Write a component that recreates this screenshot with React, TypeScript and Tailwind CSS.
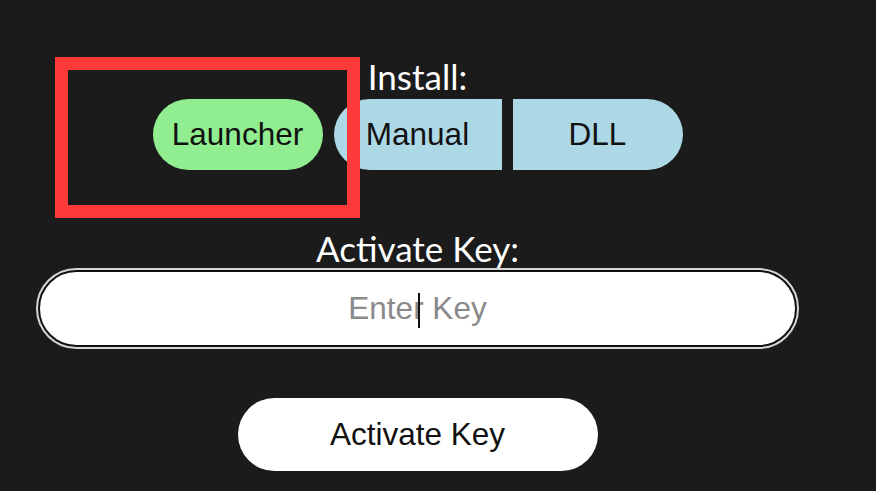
import { useState } from 'react';

const App = () => {
  const [mode, setMode] = useState('launcher');
  const [key, setKey] = useState('');

  return (
    <div className="relative min-h-screen w-full bg-[#1b1b1b] overflow-hidden">
      <div className="w-[835px] flex flex-col items-center pt-[55px]">
        <h2 className="text-white text-[35px] leading-[43px] font-['Lato',sans-serif]">Install:</h2>
        <div className="mt-[1px] flex items-center gap-[11px] font-['Liberation_Sans',Arial,sans-serif] text-[31.5px] text-[#111]">
          <button
            onClick={() => setMode('launcher')}
            className="w-[170px] h-[71px] rounded-full bg-[#90ee90] cursor-pointer">
            Launcher
          </button>
          <button
            onClick={() => setMode('manual')}
            className="w-[168px] h-[71px] rounded-l-full bg-[#add8e6] cursor-pointer">
            Manual
          </button>
          <button
            onClick={() => setMode('dll')}
            className="w-[170px] h-[71px] rounded-r-full bg-[#add8e6] cursor-pointer">
            DLL
          </button>
        </div>

        <h2 className="mt-[57px] text-white text-[35px] leading-[43px] font-['Lato',sans-serif]">Activate Key:</h2>
        <div className="relative">
          <input
            value={key}
            onChange={(e) => setKey(e.target.value)}
            placeholder="Enter Key"
            data-mode={mode}
            className="w-[759px] h-[77px] rounded-full bg-white border-2 border-[#111] outline-2 outline-[#d6d6d6] text-center text-[31.5px] text-[#111] placeholder:text-[#8a8a8a] font-['Liberation_Sans',Arial,sans-serif]"
          />
          {key === '' && <span className="absolute left-[380px] top-[23px] w-[2px] h-[35px] bg-[#111]" />}
        </div>

        <button className="mt-[51px] w-[360px] h-[73px] rounded-full bg-white text-[31.5px] text-[#111] font-['Liberation_Sans',Arial,sans-serif] cursor-pointer">
          Activate Key
        </button>
      </div>

      <div className="absolute left-[55px] top-[57px] w-[305px] h-[161px] border-[13px] border-[#fd3a3a]" />
    </div>
  );
};

export default App;
